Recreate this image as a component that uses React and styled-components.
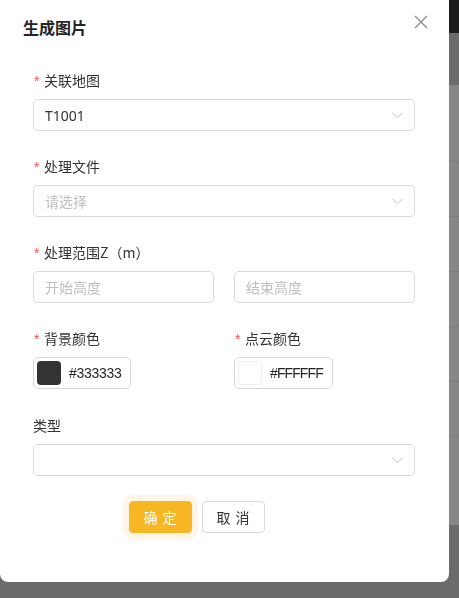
import React from "react";
import styled, { createGlobalStyle } from "styled-components";

const GlobalStyle = createGlobalStyle`
  html, body {
    margin: 0;
    padding: 0;
    background: #6b6b6b;
    font-family: "Noto Sans", "Noto Sans CJK SC", sans-serif;
  }
  * { box-sizing: border-box; }
`;

const rows = [77, 55, 55, 55, 55, 55, 88];

const App = () => {
  return (
    <>
      <GlobalStyle />
      <Backdrop>
        <TopBar />
        <ToolBar />
        {rows.map((h, i) => (
          <TableRow key={i} style={{ height: h }} />
        ))}
      </Backdrop>

      <Modal>
        <Header>
          <Title>生成图片</Title>
          <Close aria-label="close">
            <svg width="14" height="14" viewBox="0 0 14 14">
              <path d="M1 1L13 13M13 1L1 13" stroke="#8c8c8c" strokeWidth="1.4" />
            </svg>
          </Close>
        </Header>

        <Form>
          <Item>
            <Label required>关联地图</Label>
            <Select>
              <Value>T1001</Value>
              <Chevron />
            </Select>
          </Item>

          <Item>
            <Label required>处理文件</Label>
            <Select>
              <Value placeholder>请选择</Value>
              <Chevron />
            </Select>
          </Item>

          <Item>
            <Label required>处理范围Z（m）</Label>
            <Pair>
              <Input>
                <Value placeholder>开始高度</Value>
              </Input>
              <Input>
                <Value placeholder>结束高度</Value>
              </Input>
            </Pair>
          </Item>

          <Item>
            <Pair>
              <div>
                <Label required>背景颜色</Label>
                <ColorPicker>
                  <Swatch color="#333333" />
                  <Hex>#333333</Hex>
                </ColorPicker>
              </div>
              <div>
                <Label required>点云颜色</Label>
                <ColorPicker>
                  <Swatch color="#ffffff" bordered />
                  <Hex spacing="-0.9px">#FFFFFF</Hex>
                </ColorPicker>
              </div>
            </Pair>
          </Item>

          <Item>
            <Label>类型</Label>
            <Select>
              <Value />
              <Chevron />
            </Select>
          </Item>
        </Form>

        <Footer>
          <Button primary>确 定</Button>
          <Button>取 消</Button>
        </Footer>
      </Modal>
    </>
  );
};

const Chevron = () => (
  <svg width="11" height="7" viewBox="0 0 11 7">
    <path d="M0.5 0.8L5.5 5.8L10.5 0.8" fill="none" stroke="#bfbfbf" strokeWidth="1" />
  </svg>
);

const Backdrop = styled.div`
  display: flex;
  flex-direction: column;
  width: 100%;
`;

const TopBar = styled.div`
  height: 33px;
  background: #1d1d1d;
`;

const ToolBar = styled.div`
  height: 52px;
  background: #6b6b6b;
`;

const TableRow = styled.div`
  background: #878787;
  border-bottom: 1px solid #7c7c7c;
  &:last-child {
    border-bottom: none;
  }
`;

const Modal = styled.div`
  position: fixed;
  top: -10px;
  left: 0;
  width: 449px;
  height: 592px;
  padding-top: 10px;
  background: #ffffff;
  border-radius: 8px;
  display: flex;
  flex-direction: column;
`;

const Header = styled.div`
  display: flex;
  justify-content: space-between;
  align-items: flex-start;
  padding: 16px 21px 0 23px;
`;

const Title = styled.div`
  font-family: "Noto Sans CJK SC", sans-serif;
  font-size: 16px;
  font-weight: 700;
  line-height: 22px;
  color: #262626;
`;

const Close = styled.div`
  width: 14px;
  height: 14px;
  margin-top: -1px;
  display: flex;
`;

const Form = styled.div`
  display: flex;
  flex-direction: column;
  padding: 32px 34px 0 33px;
`;

const Item = styled.div`
  margin-bottom: 25px;
`;

const Label = styled.div`
  font-family: "Noto Sans CJK SC", sans-serif;
  font-size: 14px;
  line-height: 20px;
  height: 20px;
  color: #333333;
  margin-bottom: 9px;
  &::before {
    content: ${(p) => (p.required ? '"*"' : "none")};
    display: inline-block;
    width: 10px;
    margin-left: 1px;
    color: #ff4d4f;
    font-family: "Liberation Sans", sans-serif;
    font-size: 14px;
  }
`;

const Select = styled.div`
  height: 32px;
  border: 1px solid #d9d9d9;
  border-radius: 5px;
  display: flex;
  align-items: center;
  justify-content: space-between;
  padding: 0 11px 0 11px;
  background: #fff;
`;

const Input = styled(Select)``;

const Value = styled.span`
  font-family: "Noto Sans", "Noto Sans CJK SC", sans-serif;
  font-size: 14px;
  color: ${(p) => (p.placeholder ? "#bfbfbf" : "#333333")};
`;

const Pair = styled.div`
  display: grid;
  grid-template-columns: 181px 181px;
  column-gap: 20px;
`;

const ColorPicker = styled.div`
  display: inline-flex;
  align-items: center;
  height: 32px;
  padding: 0 9px 0 3px;
  border: 1px solid #d9d9d9;
  border-radius: 5px;
  gap: 8px;
`;

const Swatch = styled.span`
  width: 24px;
  height: 24px;
  border-radius: 4px;
  background: ${(p) => p.color};
  border: ${(p) => (p.bordered ? "1px solid #f0f0f0" : "none")};
`;

const Hex = styled.span`
  font-family: "Liberation Sans", sans-serif;
  font-size: 14px;
  letter-spacing: ${(p) => p.spacing || "-0.3px"};
  color: #262626;
`;

const Footer = styled.div`
  display: flex;
  gap: 10px;
  padding: 0 0 0 129px;
`;

const Button = styled.div`
  height: 32px;
  width: 63px;
  display: flex;
  align-items: center;
  justify-content: center;
  white-space: nowrap;
  border-radius: 4px;
  font-family: "Noto Sans CJK SC", sans-serif;
  font-size: 14px;
  letter-spacing: 1px;
  background: ${(p) => (p.primary ? "#f7b624" : "#ffffff")};
  color: ${(p) => (p.primary ? "#ffffff" : "#333333")};
  border: 1px solid ${(p) => (p.primary ? "#f7b624" : "#d9d9d9")};
  box-shadow: ${(p) => (p.primary ? "0 0 0 6px #fef5e6" : "none")};
`;

export default App;
